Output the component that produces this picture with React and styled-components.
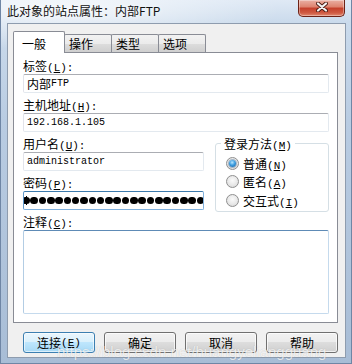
import React from "react";
import styled, {createGlobalStyle} from "styled-components";

const GlobalStyle = createGlobalStyle`
  html, body {
    margin: 0;
    padding: 0;
    background: #fff;
  }
  body {
    font-family: "Noto Sans CJK SC", sans-serif;
    font-size: 12px;
    color: #000;
  }
`;

const Window = styled('div')`
  position: relative;
  width: 352px;
  height: 364px;
  box-sizing: border-box;
  display: flex;
  flex-direction: column;
  padding: 0 6px 6px 7px;
  background:
    radial-gradient(ellipse 220px 40px at 60px 10px, rgba(255,255,255,0.75), rgba(255,255,255,0)),
    linear-gradient(180deg, #dfe9f5 0px, #cbdbec 22px, #b9cce2 120px, #a8bdd6 100%);
  box-shadow: inset 1px 0 0 #6f86a5, inset -1px 0 0 #6f86a5, inset 0 -1px 0 #6f86a5;
  overflow: hidden;
`;

const TitleBar = styled('div')`
  height: 23px;
  display: flex;
  align-items: flex-start;
  justify-content: space-between;
`;

const TitleText = styled('span')`
  margin-top: 3px;
  line-height: 16px;
  font-size: 12px;
  color: #111;
  text-shadow: 0 0 6px rgba(255,255,255,0.9);
`;

const CloseButton = styled('div')`
  width: 47px;
  height: 17px;
  margin-right: 1px;
  box-sizing: border-box;
  display: flex;
  align-items: center;
  justify-content: center;
  border: 1px solid #6d2216;
  border-top: none;
  border-radius: 0 0 5px 5px;
  background: linear-gradient(180deg, #eab0a3 0%, #de8470 42%, #c5412c 52%, #cf5a42 80%, #e28a70 100%);
  box-shadow: inset 0 0 0 1px rgba(255,255,255,0.35);
`;

const Client = styled('div')`
  flex: 1;
  display: flex;
  flex-direction: column;
  padding: 7px 7px 0 5px;
  background: #f0f0f0;
  border: 1px solid #8e9cae;
`;

const TabStrip = styled('div')`
  display: flex;
  align-items: flex-end;
  height: 22px;
  margin-bottom: -1px;
  position: relative;
  z-index: 1;
`;

const Tab = styled('div')`
  box-sizing: border-box;
  display: flex;
  align-items: center;
  justify-content: flex-start;
  border: 1px solid #898c95;
  border-bottom: none;
  border-radius: 2px 2px 0 0;
  height: ${p => (p.$active ? '22px' : '18px')};
  width: ${p => (p.$active ? '52px' : '48px')};
  margin-left: ${p => (p.$active ? '0' : '-1px')};
  margin-bottom: ${p => (p.$active ? '0' : '1px')};
  padding-left: ${p => (p.$active ? '8px' : '4px')};
  padding-top: ${p => (p.$active ? '2px' : '0')};
  background: ${p => (p.$active
    ? '#fff'
    : 'linear-gradient(180deg, #f2f2f2 0%, #ebebeb 50%, #dddddd 50%, #cfcfcf 100%)')};
  font-size: 12px;
  line-height: 16px;
  z-index: ${p => (p.$active ? 2 : 1)};
`;

const Panel = styled('div')`
  height: 271px;
  box-sizing: border-box;
  border: 1px solid #898c95;
  background: #fff;
  padding: 4px 8px 0 9px;
  display: flex;
  flex-direction: column;
`;

const Label = styled('div')`
  height: 17px;
  line-height: 17px;
  font-size: 12px;
  white-space: nowrap;
`;

const Key = styled('span')`
  font-family: "Liberation Mono", monospace;
  font-size: 11px;
`;

const Field = styled('div')`
  position: relative;
  height: 19px;
  box-sizing: border-box;
  display: flex;
  align-items: center;
  padding: 0 3px;
  margin-bottom: ${p => (p.$last ? '0' : '3px')};
  background: #fff;
  border: 1px solid ${p => (p.$focused ? '#7fb0dd' : '#e3e9ef')};
  border-top-color: ${p => (p.$focused ? '#3d7bad' : '#abadb3')};
  border-left-color: ${p => (p.$focused ? '#5f98cb' : '#e2e3ea')};
  border-radius: 2px;
  overflow: hidden;
  font-family: "Liberation Mono", monospace;
  font-size: 10px;
  white-space: nowrap;
`;

const Cjk = styled('span')`
  font-family: "Noto Sans CJK SC", sans-serif;
  font-size: 12px;
`;

const DotRow = styled('div')`
  display: flex;
  margin-left: -5px;
`;

const Dot = styled('span')`
  flex: none;
  width: 7.6px;
  height: 7.6px;
  margin-right: 0.73px;
  border-radius: 50%;
  background: #000;
`;

const Caret = styled('span')`
  position: absolute;
  left: 2px;
  top: 4px;
  width: 1px;
  height: 9px;
  background: #000;
`;

const TextArea = styled('div')`
  height: 84px;
  box-sizing: border-box;
  background: #fff;
  border: 1px solid #c5daed;
  border-top-color: #5e8bb6;
  border-left-color: #b3cde4;
  border-radius: 2px;
`;

const SplitRow = styled('div')`
  display: grid;
  grid-template-columns: 181px 114px;
  column-gap: 11px;
  align-items: start;
`;

const Column = styled('div')`
  display: flex;
  flex-direction: column;
`;

const GroupBox = styled('fieldset')`
  margin: 0 0 -1px 0;
  padding: 2px 0 1px 10px;
  min-width: 0;
  border: 1px solid #d5dfe5;
  border-radius: 3px;
`;

const Legend = styled('legend')`
  margin-left: -5px;
  padding: 0 3px;
  height: 17px;
  line-height: 17px;
  font-size: 12px;
`;

const RadioRow = styled('div')`
  display: flex;
  align-items: center;
  height: 18.5px;
  gap: 4px;
  font-size: 12px;
`;

const RadioCircle = styled('span')`
  flex: none;
  width: 13px;
  height: 13px;
  box-sizing: border-box;
  border-radius: 50%;
  border: 1px solid #8f8f8f;
  background: radial-gradient(circle at 50% 40%, #fafafa 0%, #e8e8e8 55%, #d2d2d2 100%);
  display: flex;
  align-items: center;
  justify-content: center;

  &::after {
    content: "";
    display: ${p => (p.$checked ? 'block' : 'none')};
    width: 7px;
    height: 7px;
    border-radius: 50%;
    background: radial-gradient(circle at 45% 35%, #b9e6ff 0%, #3d9ee0 45%, #175c9c 100%);
    box-shadow: 0 0 0 1px rgba(30,80,130,0.35);
  }
`;

const ButtonRow = styled('div')`
  display: flex;
  gap: 9px;
  margin-top: 9px;
  padding-left: 10px;
`;

const Button = styled('div')`
  width: 72px;
  height: 21px;
  box-sizing: border-box;
  display: flex;
  align-items: center;
  justify-content: center;
  border: 1px solid ${p => (p.$primary ? '#3c7fb1' : '#707070')};
  border-radius: 3px;
  background: ${p => (p.$primary
    ? 'linear-gradient(180deg, #eaf6fd 0%, #d9f0fc 50%, #bee6fd 50%, #a7d9f5 100%)'
    : 'linear-gradient(180deg, #f2f2f2 0%, #ebebeb 50%, #dddddd 50%, #cfcfcf 100%)')};
  box-shadow: inset 0 0 0 1px ${p => (p.$primary ? 'rgba(255,255,255,0.6)' : 'rgba(255,255,255,0.7)')};
  font-size: 12px;
  line-height: 16px;
`;

const Watermark = styled('div')`
  position: absolute;
  left: 57px;
  top: 343px;
  font-family: "Liberation Sans", sans-serif;
  font-size: 15px;
  color: rgba(255,255,255,0.75);
  text-shadow: 0 0 1px rgba(0,0,0,0.2);
  white-space: nowrap;
  pointer-events: none;
`;

const CloseIcon = () => (
    <svg width="12" height="10" viewBox="0 0 12 10" style={{marginTop: '-3px'}}>
        <path d="M2 1.5 L10 8.5 M10 1.5 L2 8.5" stroke="#4a1a12" strokeWidth="4" strokeLinecap="round"/>
        <path d="M2 1.5 L10 8.5 M10 1.5 L2 8.5" stroke="#f4f4f4" strokeWidth="2.2" strokeLinecap="round"/>
    </svg>
);

const tabs = ['一般', '操作', '类型', '选项'];

const radios = [
    {text: '普通', key: 'N', checked: true},
    {text: '匿名', key: 'A'},
    {text: '交互式', key: 'I'},
];

const buttons = [
    {text: '连接', key: 'E', primary: true},
    {text: '确定'},
    {text: '取消'},
    {text: '帮助'},
];

const Caption = ({text, k}) => (
    <>
        {text}
        {k && <Key>(<u>{k}</u>)</Key>}
    </>
);

const App = () => {
    return (
        <>
            <GlobalStyle/>
            <Window>
                <TitleBar>
                    <TitleText>此对象的站点属性：内部FTP</TitleText>
                    <CloseButton><CloseIcon/></CloseButton>
                </TitleBar>
                <Client>
                    <TabStrip>
                        {tabs.map((t, i) => (
                            <Tab key={t} $active={i === 0}>{t}</Tab>
                        ))}
                    </TabStrip>
                    <Panel>
                        <Label><Caption text="标签" k="L"/><Key>:</Key></Label>
                        <Field><Cjk>内部</Cjk>FTP</Field>
                        <Label><Caption text="主机地址" k="H"/><Key>:</Key></Label>
                        <Field>192.168.1.105</Field>
                        <SplitRow>
                            <Column>
                                <Label><Caption text="用户名" k="U"/><Key>:</Key></Label>
                                <Field>administrator</Field>
                                <Label><Caption text="密码" k="P"/><Key>:</Key></Label>
                                <Field $focused>
                                    <DotRow>
                                        {Array.from({length: 24}).map((_, i) => <Dot key={i}/>)}
                                    </DotRow>
                                    <Caret/>
                                </Field>
                            </Column>
                            <GroupBox>
                                <Legend><Caption text="登录方法" k="M"/></Legend>
                                {radios.map(r => (
                                    <RadioRow key={r.key}>
                                        <RadioCircle $checked={r.checked}/>
                                        <span><Caption text={r.text} k={r.key}/></span>
                                    </RadioRow>
                                ))}
                            </GroupBox>
                        </SplitRow>
                        <Label><Caption text="注释" k="C"/><Key>:</Key></Label>
                        <TextArea/>
                    </Panel>
                    <ButtonRow>
                        {buttons.map(b => (
                            <Button key={b.text} $primary={b.primary}>
                                <Caption text={b.text} k={b.key}/>
                            </Button>
                        ))}
                    </ButtonRow>
                </Client>
                <Watermark>https://blog.csdn.net/huangyeliangguang</Watermark>
            </Window>
        </>
    );
};

export default App;
